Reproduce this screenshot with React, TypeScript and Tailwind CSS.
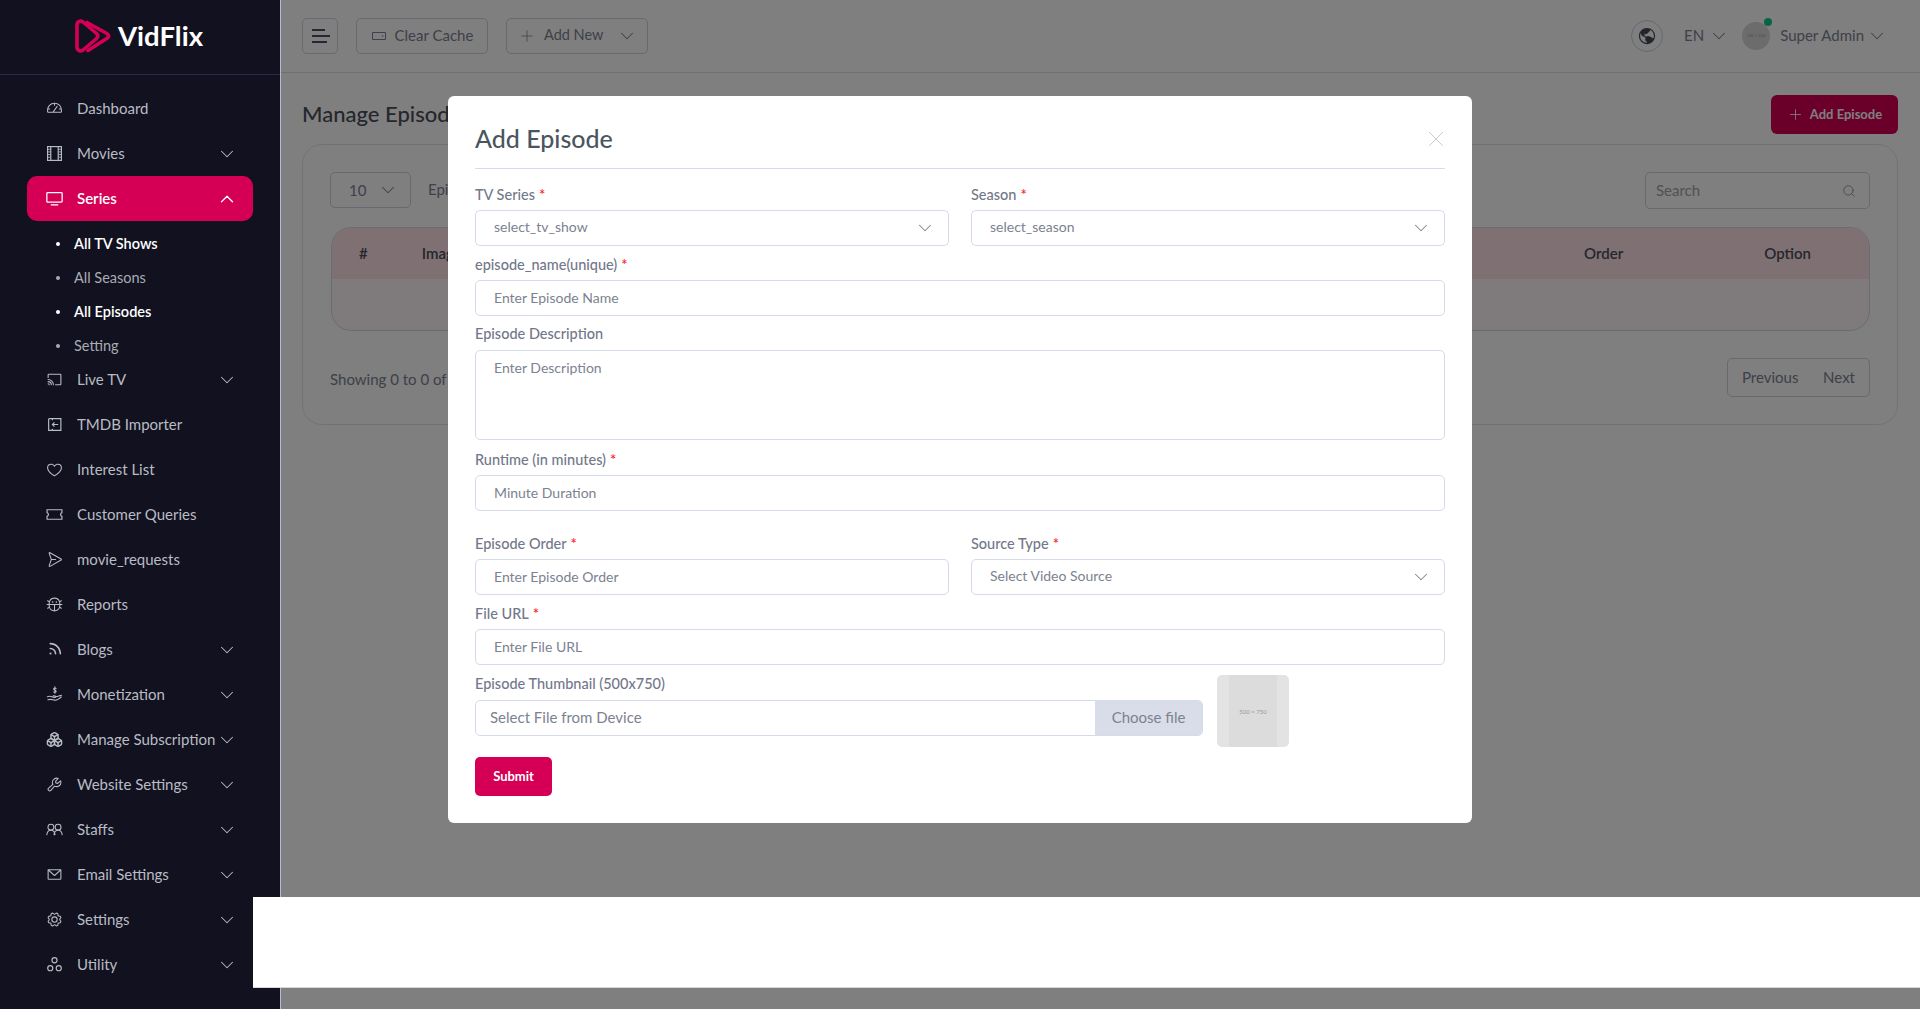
import type { ReactNode } from 'react';
import { ChevronDown, ChevronUp, Plus, Search, X, Boxes } from 'lucide-react';
import {
  PiGauge,
  PiScreencast,
  PiHeart,
  PiPaperPlaneRight,
  PiBug,
  PiRssSimpleBold,
  PiWrench,
  PiEnvelopeSimple,
  PiGear,
  PiGlobeHemisphereWestFill,
  PiHardDrive,
} from 'react-icons/pi';

type IconProps = { className?: string };

const ImportIcon = ({ className }: IconProps) => (
  <svg viewBox="0 0 16 16" fill="none" stroke="currentColor" strokeWidth="1.1" className={className}>
    <path d="M6 4V2.5h8v11H6V12M2.5 2.5H6M2.5 2.5v11H6" />
    <path d="M11.5 8H6M8 6 6 8l2 2" />
  </svg>
);

const UtilityIcon = ({ className }: IconProps) => (
  <svg viewBox="0 0 16 16" fill="none" stroke="currentColor" strokeWidth="1.1" className={className}>
    <circle cx="8" cy="4" r="2.4" />
    <circle cx="4" cy="11.5" r="2.4" />
    <circle cx="12" cy="11.5" r="2.4" />
  </svg>
);

const FilmIcon = ({ className }: IconProps) => (
  <svg viewBox="0 0 16 16" fill="none" stroke="currentColor" strokeWidth="1.1" className={className}>
    <rect x="1.5" y="1.5" width="13" height="13" />
    <path d="M4.5 1.5v13M11.5 1.5v13" />
    <path d="M1.5 4h3M1.5 6.5h3M1.5 9h3M1.5 11.5h3M11.5 4h3M11.5 6.5h3M11.5 9h3M11.5 11.5h3" strokeWidth="0.8" />
  </svg>
);

const TvIcon = ({ className }: IconProps) => (
  <svg viewBox="0 0 16 16" fill="none" stroke="currentColor" strokeWidth="1.2" className={className}>
    <rect x="0.8" y="2.5" width="14.4" height="9" rx="0.8" />
    <path d="M4.5 14h7" />
  </svg>
);

const TicketIcon = ({ className }: IconProps) => (
  <svg viewBox="0 0 16 16" fill="none" stroke="currentColor" strokeWidth="1.1" className={className}>
    <path d="M1 3.5h14v2.7a1.9 1.9 0 0 0 0 3.6v2.7H1V9.8a1.9 1.9 0 0 0 0-3.6Z" />
  </svg>
);

const HandIcon = ({ className }: IconProps) => (
  <svg viewBox="0 0 16 16" fill="none" stroke="currentColor" strokeWidth="1" strokeLinecap="round" className={className}>
    <path d="M9.5 2.2C8.9 1.6 7.2 1.7 7.2 2.8c0 1.200 2.400 1 2.400 2.200 0 1.100-1.700 1.200-2.400.6M8.400 .8v6" />
    <path d="M1.200 10.200c2-1.200 3.500-.6 5 .2 1.200.6 3 .5 3-.4 0-.7-1.300-.7-2.500-.7M9.500 10c1.800-.2 3.200-1 5-1.200M1.800 13c2.500-1 4-.2 6 .3 2.500.6 4.500-1 6.700-3" />
  </svg>
);

const StaffIcon = ({ className }: IconProps) => (
  <svg viewBox="0 0 18 16" fill="none" stroke="currentColor" strokeWidth="1.1" className={className}>
    <circle cx="5.200" cy="5.500" r="3.100" />
    <circle cx="12.800" cy="5.500" r="3.100" />
    <path d="M.8 14c.3-3 2-5.200 4.400-5.200S9.300 11 9.600 14M8.400 14c.3-3 2-5.200 4.400-5.200s4.100 2.200 4.400 5.200" />
  </svg>
);

const Logo = () => (
  <svg viewBox="0 0 36 34" fill="none" stroke="#d50055" strokeWidth="3.6" strokeLinejoin="round" className="h-[34px] w-[36px]">
    <path d="M2 6C2 2.500 5.500 1 8 3L21 14C23.500 16 23.500 18 21 20L8 31C5.500 33 2 31.500 2 28Z" />
    <path d="M12 3.500 31 14C34.500 16 34.500 18 31 20L13 31.500" strokeLinecap="round" />
  </svg>
);

const navTop = [
  { label: 'Dashboard', icon: PiGauge },
  { label: 'Movies', icon: FilmIcon, arrow: true },
];

const navBottom = [
  { label: 'Live TV', icon: PiScreencast, arrow: true },
  { label: 'TMDB Importer', icon: ImportIcon },
  { label: 'Interest List', icon: PiHeart },
  { label: 'Customer Queries', icon: TicketIcon },
  { label: 'movie_requests', icon: PiPaperPlaneRight },
  { label: 'Reports', icon: PiBug },
  { label: 'Blogs', icon: PiRssSimpleBold, arrow: true },
  { label: 'Monetization', icon: HandIcon, arrow: true },
  { label: 'Manage Subscription', icon: Boxes, arrow: true },
  { label: 'Website Settings', icon: PiWrench, arrow: true },
  { label: 'Staffs', icon: StaffIcon, arrow: true },
  { label: 'Email Settings', icon: PiEnvelopeSimple, arrow: true },
  { label: 'Settings', icon: PiGear, arrow: true },
  { label: 'Utility', icon: UtilityIcon, arrow: true },
];

const subMenu = [
  { label: 'All TV Shows', active: true },
  { label: 'All Seasons', active: false },
  { label: 'All Episodes', active: true },
  { label: 'Setting', active: false },
];

type NavEntry = { label: string; icon: (props: IconProps) => ReactNode; arrow?: boolean };

const NavItem = ({ item }: { item: NavEntry }) => {
  const Icon = item.icon;
  return (
    <div className="flex h-[45px] items-center pl-[46px] pr-[42px] text-[#b9bcc4]">
      <Icon className="h-[17px] w-[17px] shrink-0" />
      <span className="ml-[14px] flex-1 whitespace-nowrap text-[15px] leading-none">{item.label}</span>
      {item.arrow && <ChevronDown className="h-[22px] w-[22px] shrink-0" strokeWidth={1.1} />}
    </div>
  );
};

const Sidebar = () => (
  <aside className="relative z-20 h-[1009px] w-[281px] shrink-0 border-r border-[#b4bccb] bg-[#11111f]">
    <div className="flex h-[75px] items-center border-b border-[#2a2a4a] pb-[2px] pl-[75px]">
      <Logo />
      <span className="-mt-[1px] ml-[7px] text-[27.500px] font-bold leading-none text-white">VidFlix</span>
    </div>
    <nav className="pt-[11px]">
      {navTop.map((item) => (
        <NavItem key={item.label} item={item} />
      ))}
      <div className="mx-[27px] flex h-[45px] items-center rounded-[10px] bg-[#d50055] pl-[19px] pr-[15px] text-white">
        <TvIcon className="h-[17px] w-[17px] shrink-0" />
        <span className="ml-[14px] flex-1 text-[15px] font-semibold leading-none">Series</span>
        <ChevronUp className="h-[22px] w-[22px]" strokeWidth={1.4} />
      </div>
      <ul className="-mb-[6px] pt-[6px]">
        {subMenu.map((sub) => (
          <li
            key={sub.label}
            className={`flex h-[34px] items-center pl-[56px] text-[14.500px] ${sub.active ? 'font-semibold text-white' : 'text-[#a9acb4]'}`}
          >
            <span className={`mr-[14px] h-[4px] w-[4px] rounded-full ${sub.active ? 'bg-white' : 'bg-[#a9acb4]'}`} />
            {sub.label}
          </li>
        ))}
      </ul>
      {navBottom.map((item) => (
        <NavItem key={item.label} item={item} />
      ))}
    </nav>
  </aside>
);

const TopBar = () => (
  <header className="flex h-[73px] items-center border-b border-[#dbe1ec] px-[21px] text-[#7c8290]">
    <button className="flex h-[36px] w-[36px] flex-col items-start justify-center gap-[4px] rounded-[5px] border border-[#ccd3e0] pl-[9px]">
      <span className="h-[2px] w-[13px] bg-[#4b5160]" />
      <span className="h-[2px] w-[18px] bg-[#4b5160]" />
      <span className="h-[2px] w-[15px] bg-[#4b5160]" />
    </button>
    <button className="ml-[18px] flex h-[36px] w-[132px] items-center justify-center gap-[8px] rounded-[5px] border border-[#ccd3e0] pb-[2px] text-[15px]">
      <PiHardDrive className="mt-[2px] h-[16px] w-[16px]" />
      Clear Cache
    </button>
    <button className="ml-[18px] flex h-[36px] w-[142px] items-center rounded-[5px] border border-[#ccd3e0] pl-[11px] pr-[9px] text-[14.500px]">
      <Plus className="h-[18px] w-[18px]" strokeWidth={1} />
      <span className="mb-[2px] ml-[8px] flex-1 text-left">Add New</span>
      <ChevronDown className="h-[22px] w-[22px]" strokeWidth={1.1} />
    </button>
    <div className="ml-auto flex items-center">
      <span className="flex h-[32px] w-[32px] items-center justify-center rounded-full border border-[#ccd3e0]">
        <PiGlobeHemisphereWestFill className="h-[20px] w-[20px] text-[#444a58]" />
      </span>
      <span className="mb-[2px] ml-[21px] text-[15px]">EN</span>
      <ChevronDown className="ml-[4px] h-[22px] w-[22px]" strokeWidth={1.1} />
      <span className="relative ml-[12px] flex h-[28px] w-[28px] items-center justify-center rounded-full bg-[#d8d8d8] text-[4px] text-[#999999]">
        100 × 100
        <span className="absolute -top-[4px] right-[-2px] h-[8px] w-[8px] rounded-full bg-[#10c98f]" />
      </span>
      <span className="mb-[2px] ml-[10px] text-[15px]">Super Admin</span>
      <ChevronDown className="ml-[2px] h-[22px] w-[22px]" strokeWidth={1.1} />
      <span className="w-[11px]" />
    </div>
  </header>
);

const EpisodesPage = () => (
  <main className="pl-[21px] pr-[22px]">
    <div className="flex h-[71px] items-center justify-between pt-[11px]">
      <h1 className="mb-[2px] text-[22px] font-medium text-[#4a4e58]">Manage Episodes</h1>
      <button className="flex h-[39px] w-[127px] items-center justify-center gap-[6px] rounded-[6px] bg-[#d50055] pt-[1px] text-[13px] font-bold text-white">
        <Plus className="h-[17px] w-[17px]" strokeWidth={1.2} />
        Add Episode
      </button>
    </div>
    <section className="h-[281px] rounded-[20px] border border-[#dfe6f0] px-[27px] pt-[27px]">
      <div className="flex items-start">
        <div className="flex h-[36px] w-[81px] items-center justify-between rounded-[5px] border border-[#ccd3e0] pl-[18px] pr-[11px] text-[15px] text-[#7c8290]">
          10
          <ChevronDown className="h-[22px] w-[22px]" strokeWidth={1.1} />
        </div>
        <span className="ml-[17px] pt-[6px] text-[15px] text-[#7c8290]">Episodes</span>
        <div className="ml-auto flex h-[37px] w-[225px] items-center justify-between rounded-[5px] border border-[#ccd3e0] pl-[10px] pr-[13px] text-[15px] text-[#a0a4ad]">
          Search
          <Search className="h-[14px] w-[14px] text-[#7c8290]" strokeWidth={1.3} />
        </div>
      </div>
      <div className="ml-[1px] mt-[18px] h-[104px] overflow-hidden rounded-[20px] border border-[#d3d9e4] bg-[#fff5f7]">
        <div className="flex h-[51px] items-center bg-[#ffe0e8] text-[15px] font-semibold text-[#4a4e58]">
          <span className="ml-[27px]">#</span>
          <span className="ml-[54px]">Image</span>
          <span className="ml-auto mr-[141px]">Order</span>
          <span className="mr-[58px]">Option</span>
        </div>
      </div>
      <div className="mt-[27px] flex items-center justify-between">
        <span className="mt-[4px] text-[15px] text-[#7c8290]">Showing 0 to 0 of 0</span>
        <div className="flex h-[39px] w-[143px] items-center justify-between rounded-[5px] border border-[#ccd3e0] px-[14px] text-[15px] text-[#7c8290]">
          <span>Previous</span>
          <span>Next</span>
        </div>
      </div>
    </section>
  </main>
);

const inputClass =
  'block w-full rounded-[5px] border border-[#d5dbea] bg-white px-[18px] text-[14px] text-[#7c8290] outline-none placeholder:text-[#7c8290]';

const labelClass = 'block h-[22px] text-[14.500px] font-medium leading-[22px] text-[#72778a]';

const Field = ({ label, required, children, className }: { label: string; required?: boolean; children: ReactNode; className?: string }) => (
  <div className={`mb-[7px] min-w-0 flex-1 ${className ?? ''}`}>
    <label className={`mb-[5px] ${labelClass}`}>
      {label}
      {required && <span className="ml-[4px] text-[15px] text-[#ff2222]">*</span>}
    </label>
    {children}
  </div>
);

const TextInput = ({ placeholder }: { placeholder: string }) => (
  <input placeholder={placeholder} className={`${inputClass} h-[36px] pb-[2px]`} />
);

const SelectBox = ({ value }: { value: string }) => (
  <div className="flex h-[36px] items-center justify-between rounded-[5px] border border-[#d5dbea] bg-white pl-[18px] pr-[12px] text-[14px] text-[#7c8290]">
    <span className="mb-[3px]">{value}</span>
    <ChevronDown className="h-[22px] w-[22px]" strokeWidth={1.1} />
  </div>
);

const AddEpisodeModal = () => (
  <div className="fixed left-[448px] top-[96px] z-20 h-[727px] w-[1024px] rounded-[6px] bg-white px-[27px]">
    <div className="flex h-[73px] items-center justify-between border-b border-[#d5dbea] pt-[13px]">
      <h2 className="text-[25px] font-medium text-[#4a5560]">Add Episode</h2>
      <X className="-mr-[4px] h-[26px] w-[26px] text-[#c8c8c8]" strokeWidth={0.9} />
    </div>
    <form className="pt-[14px]">
      <div className="flex gap-[22px]">
        <Field label="TV Series" required>
          <SelectBox value="select_tv_show" />
        </Field>
        <Field label="Season" required>
          <SelectBox value="select_season" />
        </Field>
      </div>
      <Field label="episode_name(unique)" required>
        <TextInput placeholder="Enter Episode Name" />
      </Field>
      <Field label="Episode Description">
        <textarea placeholder="Enter Description" className={`${inputClass} h-[90px] resize-none pt-[6px]`} />
      </Field>
      <Field label="Runtime (in minutes)" required className="mt-[8px]">
        <TextInput placeholder="Minute Duration" />
      </Field>
      <div className="mt-[21px] flex gap-[22px]">
        <Field label="Episode Order" required>
          <TextInput placeholder="Enter Episode Order" />
        </Field>
        <Field label="Source Type" required>
          <SelectBox value="Select Video Source" />
        </Field>
      </div>
      <Field label="File URL" required>
        <TextInput placeholder="Enter File URL" />
      </Field>
      <div className="-mt-[7px] flex h-[82px] items-start">
        <div className="w-[728px] pt-[8px]">
          <label className={`mb-[5px] ${labelClass}`}>Episode Thumbnail (500x750)</label>
          <div className="flex h-[36px] overflow-hidden rounded-[5px] border border-[#d5dbea] text-[15px] text-[#7c8290]">
            <span className="flex flex-1 items-center pb-[1px] pl-[14px]">Select File from Device</span>
            <span className="flex w-[107px] items-center justify-center bg-[#d8dde9] pb-[1px]">Choose file</span>
          </div>
        </div>
        <div className="ml-[14px] mt-[10px] flex h-[72px] w-[72px] justify-center rounded-[5px] bg-[#e3e3e3]">
          <span className="flex h-full w-[48px] items-center justify-center bg-[#dcdcdc] text-[6px] text-[#999999]">500 × 750</span>
        </div>
      </div>
      <button type="button" className="mt-[10px] h-[39px] w-[77px] rounded-[5px] bg-[#d50055] text-[13px] font-bold text-white">
        Submit
      </button>
    </form>
  </div>
);

export default function App() {
  return (
    <div className="relative flex h-[1009px] overflow-hidden bg-[#fefefe] font-['Lato','Liberation_Sans',sans-serif]">
      <Sidebar />
      <div className="min-w-0 flex-1">
        <TopBar />
        <EpisodesPage />
      </div>
      <div className="fixed inset-0 z-10 bg-black/50" />
      <AddEpisodeModal />
      <div className="absolute left-[253px] right-0 top-[897px] z-30 h-[91px] border-b border-[#d8d8d8] bg-white" />
    </div>
  );
}
